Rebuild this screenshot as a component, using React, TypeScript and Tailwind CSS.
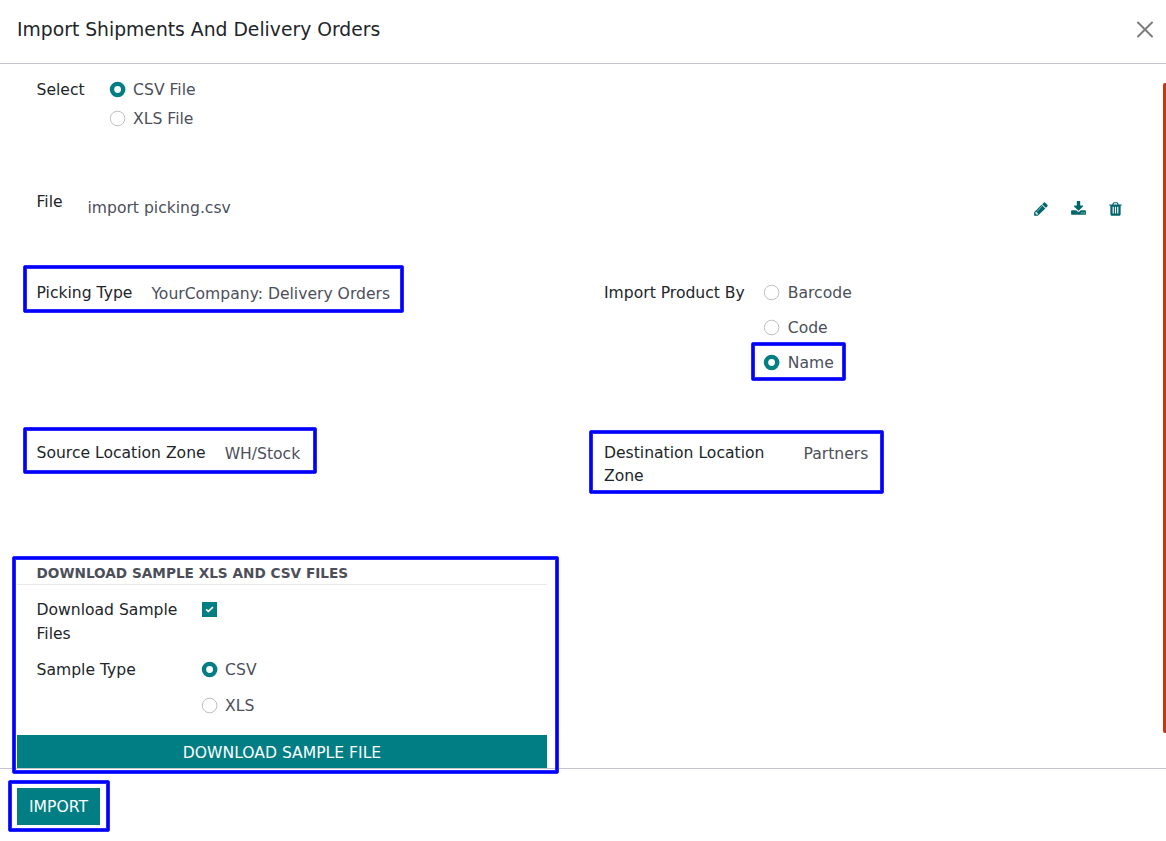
import type { ReactNode } from "react";

function Radio({ label, checked = false }: { label: string; checked?: boolean }) {
  return (
    <label className="flex h-6 items-center">
      <svg className="-mr-px size-4 shrink-0 overflow-visible" viewBox="0 0 16 16">
        {checked ? (
          <>
            <circle cx="7.6" cy="7.5" r="7.8" fill="#017e84" />
            <circle cx="7.6" cy="7.5" r="3.4" fill="white" />
          </>
        ) : (
          <circle cx="7.6" cy="7.5" r="7.3" fill="white" stroke="#bfbfbf" />
        )}
      </svg>
      <span className="ml-[8.6px] pt-px whitespace-nowrap text-[#4c4f5a]">{label}</span>
    </label>
  );
}

function Value({ children }: { children: ReactNode }) {
  return <span className="whitespace-nowrap text-[#4c4f5a]">{children}</span>;
}

function Pencil() {
  return (
    <svg width="14" height="16" viewBox="0 0 1536 1792" fill="#01666b">
      <path d="M363 1536l91-91-235-235-91 91v107h128v128h107zm523-928q0-22-22-22-10 0-17 7l-542 542q-7 7-7 17 0 22 22 22 10 0 17-7l542-542q7-7 7-17zm-54-192l416 416-832 832h-416v-416zm683 96q0 53-37 90l-166 166-416-416 166-165q36-38 90-38 53 0 91 38l235 234q37 39 37 91z" />
    </svg>
  );
}

function Download() {
  return (
    <svg width="15" height="16" viewBox="0 0 1664 1792" fill="#01666b">
      <path d="M1280 1344q0-26-19-45t-45-19-45 19-19 45 19 45 45 19 45-19 19-45zm256 0q0-26-19-45t-45-19-45 19-19 45 19 45 45 19 45-19 19-45zm128-224v320q0 40-28 68t-68 28h-1472q-40 0-68-28t-28-68v-320q0-40 28-68t68-28h465l135 136q58 56 136 56t136-56l136-136h464q40 0 68 28t28 68zm-325-569q17 41-14 70l-448 448q-18 19-45 19t-45-19l-448-448q-31-29-14-70 17-39 59-39h256v-448q0-26 19-45t45-19h256q26 0 45 19t19 45v448h256q42 0 59 39z" />
    </svg>
  );
}

function Trash() {
  return (
    <svg width="13" height="16" viewBox="0 0 1408 1792" fill="#01666b">
      <path d="M512 1376v-704q0-14-9-23t-23-9h-64q-14 0-23 9t-9 23v704q0 14 9 23t23 9h64q14 0 23-9t9-23zm256 0v-704q0-14-9-23t-23-9h-64q-14 0-23 9t-9 23v704q0 14 9 23t23 9h64q14 0 23-9t9-23zm256 0v-704q0-14-9-23t-23-9h-64q-14 0-23 9t-9 23v704q0 14 9 23t23 9h64q14 0 23-9t9-23zm-544-992h448l-48-117q-7-9-17-11h-317q-10 2-17 11zm928 32v64q0 14-9 23t-23 9h-96v948q0 83-47 143.500t-113 60.500h-832q-66 0-113-58.500t-47-141.500v-952h-96q-14 0-23-9t-9-23v-64q0-14 9-23t23-9h309l70-167q15-37 54-63t79-26h320q40 0 79 26t54 63l70 167h309q14 0 23 9t9 23z" />
    </svg>
  );
}

function Highlight({ className }: { className: string }) {
  return (
    <div className={`pointer-events-none absolute rounded-[2px] border border-[#2a2aff] ${className}`}>
      <div className="size-full border-2 border-[#0000ff]">
        <div className="size-full border border-[#2a2aff]" />
      </div>
    </div>
  );
}

export default function App() {
  return (
    <div className="relative flex h-[841px] w-[1166px] flex-col overflow-hidden bg-white font-['DejaVu_Sans',sans-serif] text-[15.6px] leading-[23.5px] text-[#212529]">
      <header className="flex h-16 shrink-0 items-center justify-between border-b border-[#c5c6cd] pr-3 pb-[5px] pl-[17px]">
        <h1 className="pt-px text-[18.75px] leading-7">Import Shipments And Delivery Orders</h1>
        <button aria-label="Close" className="flex size-[18px] items-center justify-center">
          <svg width="18" height="18" viewBox="0 0 18 18" fill="none" stroke="#7c7c7e" strokeWidth="2" strokeLinecap="round">
            <path d="M2 2.500 16 16.500M16 2.500 2 16.500" />
          </svg>
        </button>
      </header>

      <main className="flex h-[704px] shrink-0 justify-between">
        <div className="flex w-[1126px] flex-col">
          <section className="flex h-[127px] pt-[15px] pl-[36.5px]">
            <span className="w-[73px]">Select</span>
            <div className="-mt-px flex flex-col gap-[5px]">
              <Radio label="CSV File" checked />
              <Radio label="XLS File" />
            </div>
          </section>

          <section className="flex h-[91px] pl-[36.5px]">
            <span className="w-[51px]">File</span>
            <div className="flex h-9 flex-1 items-center justify-between">
              <Value>import picking.csv</Value>
              <div className="flex items-center gap-[23px] pr-1 pb-px">
                <Pencil />
                <Download />
                <Trash />
              </div>
            </div>
          </section>

          <section className="grid h-[160px] grid-cols-[567.5px_1fr] pl-[36.5px]">
            <div className="flex gap-[19px]">
              <span>Picking Type</span>
              <div className="pt-px">
                <Value>YourCompany: Delivery Orders</Value>
              </div>
            </div>
            <div className="flex gap-[19.4px]">
              <span>Import Product By</span>
              <div className="-mt-px flex flex-col gap-[11px]">
                <Radio label="Barcode" />
                <Radio label="Code" />
                <Radio label="Name" checked />
              </div>
            </div>
          </section>

          <section className="grid h-[119px] grid-cols-[567.5px_1fr] pl-[36.5px]">
            <div className="flex gap-[19px]">
              <span>Source Location Zone</span>
              <div className="pt-px">
                <Value>WH/Stock</Value>
              </div>
            </div>
            <div className="flex">
              <span className="w-[199.5px] pr-4 leading-[23px]">Destination Location Zone</span>
              <div className="pt-px">
                <Value>Partners</Value>
              </div>
            </div>
          </section>

          <section className="ml-[17px] flex w-[530px] flex-1 flex-col">
            <h2 className="flex h-6 shrink-0 items-center border-b border-[#e7e9ed] pt-0.5 pl-[19.5px] text-[13.65px] font-bold text-[#4c4f5a]">
              DOWNLOAD SAMPLE XLS AND CSV FILES
            </h2>
            <div className="flex h-[74px] shrink-0 pt-[14px] pl-[19.5px]">
              <span className="w-[165px] pr-4">Download Sample Files</span>
              <span className="mt-[3px] flex size-[15px] items-center justify-center bg-[#017e84]">
                <svg width="9" height="9" viewBox="0 0 9 9" fill="none" stroke="white" strokeWidth="1.7">
                  <path d="m1 4.300 2.400 2.100L8 2.200" />
                </svg>
              </span>
            </div>
            <div className="flex h-[76px] shrink-0 pl-[19.5px]">
              <span className="w-[165px]">Sample Type</span>
              <div className="-mt-px flex flex-col gap-3">
                <Radio label="CSV" checked />
                <Radio label="XLS" />
              </div>
            </div>
            <button className="flex h-[33px] shrink-0 items-center justify-center bg-[#017e84] pt-1 text-white">
              DOWNLOAD SAMPLE FILE
            </button>
          </section>
        </div>
        <div className="mt-[19px] h-[650px] w-[3px] rounded-l-[2px] bg-[#c13b0f]" />
      </main>

      <footer className="flex flex-1 items-start border-t border-[#c5c6cd] pt-[19px] pl-[17px]">
        <button className="flex h-[37px] w-[83px] items-center justify-center bg-[#017e84] pt-0.5 text-white">
          IMPORT
        </button>
      </footer>

      <Highlight className="top-[265px] left-[23px] h-[48px] w-[381px]" />
      <Highlight className="top-[342px] left-[751px] h-[39px] w-[95px]" />
      <Highlight className="top-[427px] left-[23px] h-[47px] w-[294px]" />
      <Highlight className="top-[430px] left-[589px] h-[64px] w-[295px]" />
      <Highlight className="top-[556px] left-[12px] h-[218px] w-[547px]" />
      <Highlight className="top-[780px] left-[8px] h-[52px] w-[102px]" />
    </div>
  );
}
